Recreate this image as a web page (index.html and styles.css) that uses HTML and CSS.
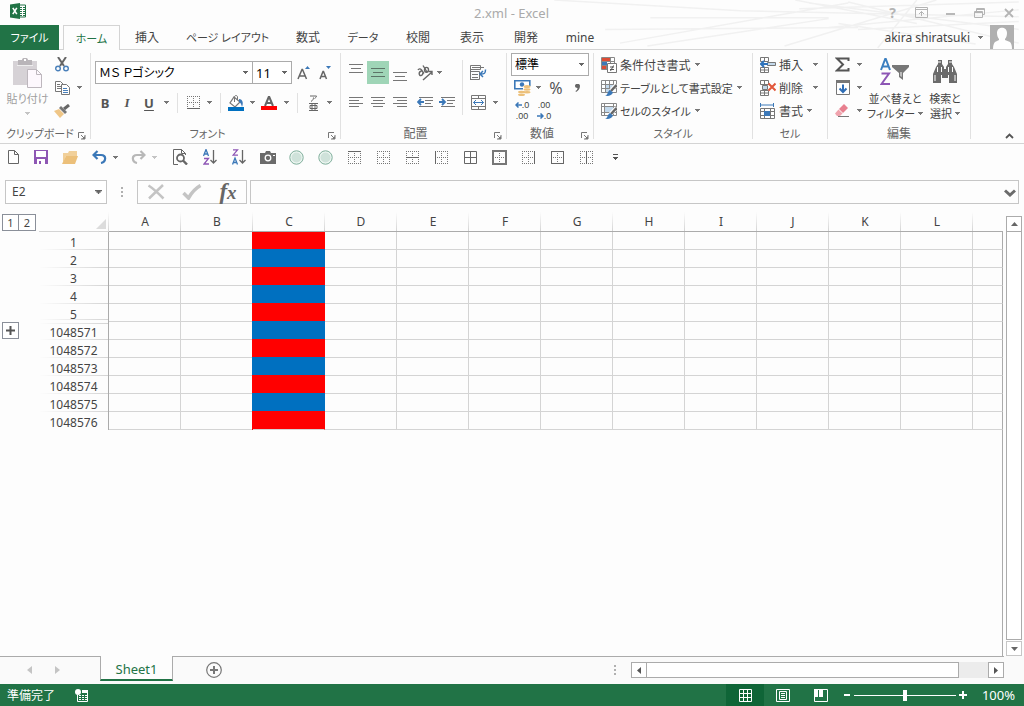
FILE: index.html
```html
<!DOCTYPE html>
<html lang="ja">
<head>
<meta charset="utf-8">
<meta name="viewport" content="width=device-width, initial-scale=1">
<title>2.xml - Excel</title>
<link rel="stylesheet" href="styles.css">
</head>
<body>
<svg class="defs" aria-hidden="true">
  <symbol id="caret" viewBox="0 0 5 3"><path d="M0 0h5v1H4v1H3v1H2V2H1V1H0z" fill="currentColor"/></symbol>
  <symbol id="launch" viewBox="0 0 8 8"><path d="M.5 6V.5H6M3 3l3 3M7 3v4H3" fill="none" stroke="#777"/><path d="M4 7h3V4z" fill="#777"/></symbol>
  <symbol id="dots" viewBox="0 0 13 13"><path d="M0 .5h13M0 6.5h13M0 12.5h13M.5 0v13M6.5 0v13M12.5 0v13" stroke="#777" stroke-dasharray="1 1" fill="none"/></symbol>
  <symbol id="table-brush" viewBox="0 0 16 16"><path d="M.5.5h15v12H.5zM.5 4.500h15M.5 8.500h15M4.500.5v12M8.500.5v12M12.500.5v8" fill="#fff" stroke="#888"/><path d="M5 5h3v3H5zM9 5h3v3H9zM5 9h3v3H5z" fill="#c3d9ec"/><path d="M15.500 4.500L9.500 11" stroke="#fff" stroke-width="4"/><path d="M15.500 5L10 11" stroke="#666" stroke-width="2.500"/><path d="M4 15.500c3 0 2-4 5-5.500l3 2.500c-1 3-5 4-8 3z" fill="#3b78b8"/></symbol>
  <symbol id="style-brush" viewBox="0 0 16 16"><path d="M.5.5h15v12H.5zM.5 3.500h15M.5 9.500h15M3.500.5v12M12.500.5v12" fill="#fff" stroke="#888"/><path d="M4 4h8v5H4z" fill="#c3d9ec"/><path d="M15.500 4.500L9.500 11" stroke="#fff" stroke-width="4"/><path d="M15.500 5L10 11" stroke="#666" stroke-width="2.500"/><path d="M4 15.500c3 0 2-4 5-5.500l3 2.500c-1 3-5 4-8 3z" fill="#3b78b8"/></symbol>
  <symbol id="macro" viewBox="0 0 15 15"><circle cx="7.500" cy="7.500" r="6.700" fill="#eef6f2" stroke="#7fae9b"/><circle cx="7.500" cy="7.500" r="5" fill="#cfe2da"/></symbol>
</svg>

<header class="top">
  <svg class="sketch" viewBox="0 0 524 50" fill="none" stroke="#f1f1f1" stroke-width="1.500" aria-hidden="true">
    <path d="M50 0L240 11M117 44L350 3M148 18H330M102 30L360 28M145 47L330 19M296 0L420 24M240 11L524 17M300 9L524 2M285 47L440 0M330 28L524 10M340 24L480 45M310 3L524 30M360 30L524 22M420 0L380 49M350 2L524 44"/>
  </svg>
  <div class="titlebar">
    <svg class="logo" width="16" height="16" viewBox="0 0 16 16" aria-label="Excel"><path d="M9 2h6.500v12H9z" fill="#fff" stroke="#217346"/><path d="M10 4h2v1h-2zM13 4h2v1h-2zM10 6h2v1h-2zM13 6h2v1h-2zM10 8h2v1h-2zM13 8h2v1h-2zM10 10h2v1h-2zM13 10h2v1h-2zM10 12h2v1h-2zM13 12h2v1h-2z" fill="#217346"/><path d="M0 1.500L10 0v16L0 14.500z" fill="#217346"/><path d="M2.800 4.800l4 6.400M6.800 4.800l-4 6.400" stroke="#fff" stroke-width="1.600"/></svg>
    <h1 class="title">2.xml - Excel</h1>
    <div class="window-controls">
      <button class="win help" aria-label="ヘルプ">?</button>
      <button class="win" aria-label="リボンの表示オプション"><svg width="13" height="11" viewBox="0 0 13 11" fill="none" stroke="#b4b4b4"><path d="M.5.5h12v10H.5zM.5 2.500h12M6.500 9V4.500M4 7l2.500-2.500L9 7"/></svg></button>
      <button class="win" aria-label="最小化"><svg width="9" height="11" viewBox="0 0 9 11"><path d="M0 6h9v2H0z" fill="#b8b8b8"/></svg></button>
      <button class="win" aria-label="元に戻す"><svg width="11" height="10" viewBox="0 0 11 10" fill="none" stroke="#b4b4b4"><path d="M.5 3.500h8v6h-8zM.5 4.500h8M2.500 3V.5h8v6H9M2.500 1.500h8"/></svg></button>
      <button class="win" aria-label="閉じる"><svg width="10" height="10" viewBox="0 0 10 10"><path d="M1 1l8 8M9 1L1 9" stroke="#b4b4b4" stroke-width="1.800"/></svg></button>
    </div>
  </div>
  <nav class="tabs">
    <button class="file kana">ファイル</button>
    <button class="tab active kana">ホーム</button>
    <button class="tab">挿入</button>
    <button class="tab wide kana">ページ レイアウト</button>
    <button class="tab">数式</button>
    <button class="tab data kana">データ</button>
    <button class="tab">校閲</button>
    <button class="tab">表示</button>
    <button class="tab">開発</button>
    <button class="tab">mine</button>
    <button class="user">akira shiratsuki <svg class="caret" width="5" height="3"><use href="#caret"/></svg></button>
    <svg class="avatar" width="24" height="24" viewBox="0 0 24 24" aria-hidden="true"><path d="M0 0h24v24H0z" fill="#b0b0b0"/><path d="M7 8c0-7 10-7 10 0 0 3-1 5-2 6v1l5 2c1 1 2 3 2 7H3c0-4 1-6 2-7l4-2v-1C8 13 7 11 7 8z" fill="#fff"/></svg>
  </nav>
</header>

<section class="ribbon" aria-label="リボン">
  <div class="group g-clip">
    <div class="body">
      <button class="big paste">
        <svg width="30" height="30" viewBox="0 0 30 30"><path d="M0 3h24v24H0z" fill="#d6d2d6"/><path d="M5 2h4c0-3 6-3 6 0h4v5H5z" fill="#b9b5b9"/><path d="M11 1h2v2h-2z" fill="#fff"/><path d="M4 7h16v1H4z" fill="#eee"/><path d="M14.500 11.500h9l5 5v13h-14z" fill="#fdf8fd" stroke="#bdb7bd"/><path d="M23.500 11.500v5h5" fill="none" stroke="#bdb7bd"/></svg>
        <span class="kana">貼り付け</span>
        <svg class="caret" width="5" height="3"><use href="#caret"/></svg>
      </button>
      <div class="stack">
        <div class="line"><button class="ib" aria-label="切り取り"><svg width="14" height="15" viewBox="0 0 14 15" fill="none"><path d="M3 0l6 9M11 0L5 9" stroke="#666" stroke-width="2"/><circle cx="3" cy="11.500" r="2.300" stroke="#4a80ba" stroke-width="1.400"/><circle cx="11" cy="11.500" r="2.300" stroke="#4a80ba" stroke-width="1.400"/></svg></button></div>
        <div class="line"><button class="ib" aria-label="コピー"><svg width="15" height="14" viewBox="0 0 15 14" fill="#fff" stroke="#777"><path d="M.5.5h5l3 3v7h-8zM2 3.500h3M2 5.500h4M2 7.500h4"/><path d="M6.500 3.500h5l3 3v7h-8z"/><path d="M8 7.500h4M8 9.500h5M8 11.500h5" stroke="#4a80ba"/></svg></button><button class="cb" aria-label="コピーのオプション"><svg class="caret" width="5" height="3"><use href="#caret"/></svg></button></div>
        <div class="line"><button class="ib" aria-label="書式のコピー"><svg width="16" height="14" viewBox="0 0 16 14"><path d="M15 1l-5 4" stroke="#666" stroke-width="3"/><path d="M7 2l6 6-2 2-6-6z" fill="#777"/><path d="M0 7l5-2 5 5-4 4z" fill="#efc687"/></svg></button></div>
      </div>
    </div>
    <div class="label"><span class="kana">クリップボード</span><button class="launch" aria-label="クリップボードの設定"><svg width="8" height="8"><use href="#launch"/></svg></button></div>
  </div>

  <div class="group g-font">
    <div class="body rows font-rows">
      <div class="line">
        <select class="combo family" aria-label="フォント"><option>ＭＳ Ｐゴシック</option></select>
        <select class="combo size" aria-label="フォント サイズ"><option>11</option></select>
        <button class="ib" aria-label="拡大"><svg width="13" height="14" viewBox="0 0 13 14" fill="none"><path d="M1 13L5 3.500h.5L9.500 13M2.500 10h6" stroke="#666" stroke-width="1.500"/><path d="M8 3h5l-2.500-3z" fill="#3b78b8"/></svg></button>
        <button class="ib" aria-label="縮小"><svg width="12" height="14" viewBox="0 0 12 14" fill="none"><path d="M1 13L4 5.500h.5L7.500 13M2 10.500h5" stroke="#666" stroke-width="1.500"/><path d="M7 0h5L9.500 3z" fill="#3b78b8"/></svg></button>
      </div>
      <div class="line">
        <button class="ib bold">B</button><button class="ib italic">I</button><button class="ib under">U</button><button class="cb" aria-label="下線"><svg class="caret" width="5" height="3"><use href="#caret"/></svg></button>
        <i class="sep"></i>
        <button class="ib s" aria-label="罫線"><svg width="13" height="13" viewBox="0 0 13 13"><use href="#dots"/><path d="M0 12h13v1H0z" fill="#666"/></svg></button><button class="cb" aria-label="罫線の種類"><svg class="caret" width="5" height="3"><use href="#caret"/></svg></button>
        <i class="sep"></i>
        <button class="ib s" aria-label="塗りつぶし"><svg width="16" height="16" viewBox="0 0 16 16"><path d="M6 2l6 5-5 5-5-4z" fill="#fff" stroke="#777" stroke-width="1.200"/><path d="M6.500 7V2c0-2 3-2 3 0v3" fill="none" stroke="#777"/><path d="M11 4c3 0 5 3 3 8-1-3-1-4-3-5z" fill="#3b78b8"/><path d="M0 12h16v4H0z" fill="#0070c0"/></svg></button><button class="cb" aria-label="塗りつぶしの色"><svg class="caret" width="5" height="3"><use href="#caret"/></svg></button>
        <button class="ib" aria-label="フォントの色"><svg width="16" height="14" viewBox="0 0 16 14"><path d="M4 10L7.700 1h.6L12 10M5.500 7h5" fill="none" stroke="#666" stroke-width="2"/><path d="M0 10h16v4H0z" fill="red"/></svg></button><button class="cb" aria-label="色の選択"><svg class="caret" width="5" height="3"><use href="#caret"/></svg></button>
        <i class="sep"></i>
        <button class="ib s" aria-label="ふりがな"><svg width="9" height="16" viewBox="0 0 9 16" fill="none" stroke="#666"><path d="M1 1h6.500c0 1-1 2-2 2.500M4.500 2.500c0 2-1 3-2.500 4M0 8.500h9M3 9v6M6 9v6M1 10.500h7v3H1zM0 15.500h9"/></svg></button><button class="cb" aria-label="ふりがなの設定"><svg class="caret" width="5" height="3"><use href="#caret"/></svg></button>
      </div>
    </div>
    <div class="label"><span class="kana">フォント</span><button class="launch" aria-label="フォントの設定"><svg width="8" height="8"><use href="#launch"/></svg></button></div>
  </div>

  <div class="group g-align">
    <div class="body">
      <div class="rows font-rows">
        <div class="line">
          <button class="ib" aria-label="上揃え"><svg width="14" height="17" viewBox="0 0 14 17"><path d="M0 .5h14M2 4.500h10M0 8.500h14" stroke="#777"/></svg></button>
          <button class="ib on" aria-label="上下中央揃え"><svg width="14" height="17" viewBox="0 0 14 17"><path d="M0 4.500h14M2 8.500h10M0 12.500h14" stroke="#5c7467"/></svg></button>
          <button class="ib" aria-label="下揃え"><svg width="14" height="17" viewBox="0 0 14 17"><path d="M0 8.500h14M2 12.500h10M0 16.500h14" stroke="#777"/></svg></button>
          <button class="ib orient" aria-label="方向"><svg width="17" height="16" viewBox="0 0 17 16" fill="none" stroke="#666" stroke-width="1.400"><path d="M1 5c1-2 3-1 3.500 0L7 8.500M4.500 6C1 7 2 11 4 10.500c2-.5 2-2 1.500-3M6 .5L10 7"/><ellipse cx="9.500" cy="4.800" rx="2" ry="2.400"/><path d="M6 15l9-8M11.500 6.500H15V10"/></svg></button><button class="cb" aria-label="方向の選択"><svg class="caret" width="5" height="3"><use href="#caret"/></svg></button>
        </div>
        <div class="line">
          <button class="ib" aria-label="左揃え"><svg width="14" height="11" viewBox="0 0 14 11"><path d="M0 .5h14M0 3.500h10M0 6.500h14M0 9.500h10" stroke="#777"/></svg></button>
          <button class="ib" aria-label="中央揃え"><svg width="14" height="11" viewBox="0 0 14 11"><path d="M0 .5h14M2 3.500h10M0 6.500h14M2 9.500h10" stroke="#777"/></svg></button>
          <button class="ib" aria-label="右揃え"><svg width="14" height="11" viewBox="0 0 14 11"><path d="M0 .5h14M4 3.500h10M0 6.500h14M4 9.500h10" stroke="#777"/></svg></button>
          <button class="ib indent" aria-label="インデントを減らす"><svg width="16" height="11" viewBox="0 0 16 11" fill="none"><path d="M2 .5h14M8 3.500h8M8 6.500h6M2 9.500h14" stroke="#777"/><path d="M1 5h6M4 2L1 5l3 3" stroke="#3b78b8" stroke-width="1.800"/></svg></button>
          <button class="ib" aria-label="インデントを増やす"><svg width="16" height="11" viewBox="0 0 16 11" fill="none"><path d="M2 .5h14M8 3.500h8M8 6.500h6M2 9.500h14" stroke="#777"/><path d="M0 5h6M3 2l3 3-3 3" stroke="#3b78b8" stroke-width="1.800"/></svg></button>
        </div>
      </div>
      <i class="sep tall"></i>
      <div class="rows font-rows">
        <div class="line"><button class="ib" aria-label="折り返して全体を表示する"><svg width="17" height="16" viewBox="0 0 17 16" fill="none" stroke="#777"><path d="M.5.5h10v4H.5zM2 2.500h12M.5 4v11M.5 6.500h9v8h-9M2 9.500h6M2 12.500h6"/><path d="M15.500 4.500c0 4-1 4.500-5 4.500M13 6l-3 3 3 3" stroke="#3b78b8" stroke-width="1.500"/></svg></button></div>
        <div class="line"><button class="ib" aria-label="セルを結合して中央揃え"><svg width="15" height="15" viewBox="0 0 15 15" fill="none" stroke="#777"><path d="M.5.5h14v14H.5zM.5 3.500h14M.5 11.500h14M7.500 0v3M7.500 12v3"/><path d="M2.500 7.500h10M5 5L2.500 7.500 5 10M10 5l2.500 2.500L10 10" stroke="#3b78b8"/></svg></button><button class="cb" aria-label="結合"><svg class="caret" width="5" height="3"><use href="#caret"/></svg></button></div>
      </div>
    </div>
    <div class="label"><span>配置</span><button class="launch" aria-label="配置の設定"><svg width="8" height="8"><use href="#launch"/></svg></button></div>
  </div>

  <div class="group g-num">
    <div class="body rows three">
      <select class="combo format" aria-label="数値の書式"><option>標準</option></select>
      <div class="line">
        <button class="ib" aria-label="通貨"><svg width="17" height="17" viewBox="0 0 17 17"><path d="M.8 1.800h15v8H.8z" fill="#fff" stroke="#3b78b8" stroke-width="1.600"/><circle cx="8" cy="5.500" r="2.200" fill="#3b78b8"/><path d="M9 7h8v8H9zM4 12h7v5H4z" fill="#fff"/><g fill="#ecc07a"><ellipse cx="13" cy="7.500" rx="3.500" ry="1.500"/><ellipse cx="13" cy="10.500" rx="3.500" ry="1.200"/><ellipse cx="13" cy="13.200" rx="3.500" ry="1.200"/><ellipse cx="7.500" cy="13" rx="3.500" ry="1.200"/><ellipse cx="7.500" cy="15.800" rx="3.500" ry="1.200"/></g></svg></button><button class="cb" aria-label="通貨の種類"><svg class="caret" width="5" height="3"><use href="#caret"/></svg></button>
        <button class="ib pct" aria-label="パーセント">%</button><button class="ib comma" aria-label="桁区切り"><svg width="5" height="8" viewBox="0 0 5 8"><path d="M0 2c0-3 5-3 5 0 0 3-2 5-4 6l-.5-1c1-.5 2-1.500 2-3C1 4 0 3 0 2z" fill="#666"/></svg></button>
      </div>
      <div class="line">
        <button class="ib dec" aria-label="小数点以下の表示桁数を増やす"><span><svg width="7" height="6" viewBox="0 0 7 6"><path d="M7 3H1M3.500.5L1 3l2.500 2.500" fill="none" stroke="#3b78b8" stroke-width="1.500"/></svg>.0</span><span>.00</span></button>
        <button class="ib dec" aria-label="小数点以下の表示桁数を減らす"><span>.00</span><span><svg width="7" height="6" viewBox="0 0 7 6"><path d="M0 3h6M3.500.5L6 3 3.500 5.500" fill="none" stroke="#3b78b8" stroke-width="1.500"/></svg>.0</span></button>
      </div>
    </div>
    <div class="label"><span>数値</span><button class="launch" aria-label="数値の設定"><svg width="8" height="8"><use href="#launch"/></svg></button></div>
  </div>

  <div class="group g-style">
    <div class="body rows three">
      <button class="cmd"><svg width="16" height="16" viewBox="0 0 16 16"><path d="M.5.5h13v12H.5zM.5 4.500h13M.5 8.500h13M5.500 0v12M9.500 0v12" fill="#fff" stroke="#888"/><path d="M1 1h8v3H1zM1 9h4v3H1z" fill="#dd4b34"/><path d="M1 5h5v3H1z" fill="#3b78b8"/><path d="M6.500 6.500h9v9h-9z" fill="#fff" stroke="#777"/><path d="M9 10h4M9 12.500h4M12.500 8.500l-3 5.500" stroke="#555"/></svg><span>条件付き書式</span><svg class="caret" width="5" height="3"><use href="#caret"/></svg></button>
      <button class="cmd kana"><svg width="16" height="16"><use href="#table-brush"/></svg><span>テーブルとして書式設定</span><svg class="caret" width="5" height="3"><use href="#caret"/></svg></button>
      <button class="cmd kana"><svg width="16" height="16"><use href="#style-brush"/></svg><span>セルのスタイル</span><svg class="caret" width="5" height="3"><use href="#caret"/></svg></button>
    </div>
    <div class="label"><span class="kana">スタイル</span></div>
  </div>

  <div class="group g-cell">
    <div class="body rows three">
      <button class="cmd"><svg width="16" height="16" viewBox="0 0 16 16" fill="#fff" stroke="#777"><path d="M.5.5h8v4h-8zM4.500.5v4M.5 10.500h8v5h-8zM4.500 10.500v5M.5 13h8"/><path d="M7.500 5.500h8v3h-8z" fill="#c3d9ec"/><path d="M1 7h7M4 4L1 7l3 3" fill="none" stroke="#2f73bb" stroke-width="2"/></svg><span>挿入</span><svg class="caret" width="5" height="3"><use href="#caret"/></svg></button>
      <button class="cmd"><svg width="16" height="16" viewBox="0 0 16 16" fill="#fff" stroke="#777"><path d="M.5.5h8v4h-8zM4.500.5v4M.5 10.500h8v5h-8zM4.500 10.500v5M.5 13h8"/><path d="M2.500 5.500h5v4h-5z" fill="#c3d9ec"/><path d="M8.500 3.500l7 7M15.500 3.500l-7 7" stroke="#e2573b" stroke-width="2"/></svg><span>削除</span><svg class="caret" width="5" height="3"><use href="#caret"/></svg></button>
      <button class="cmd near"><svg width="16" height="16" viewBox="0 0 16 16" fill="#fff" stroke="#777"><path d="M.5 0v4M13.500 0v4M1 2h12" stroke="#3b78b8"/><path d="M.5 5.500h14v10H.5zM.5 8.500h14M.5 12.500h14M4.500 5v10M10.500 5v10"/><path d="M4 8h6v5H4z" fill="#3b78b8" stroke="none"/></svg><span>書式</span><svg class="caret" width="5" height="3"><use href="#caret"/></svg></button>
    </div>
    <div class="label"><span class="kana">セル</span></div>
  </div>

  <div class="group g-edit">
    <div class="body">
      <div class="rows three">
        <div class="line"><button class="ib" aria-label="合計"><svg width="15" height="15" viewBox="0 0 15 15"><path d="M13.500 4V1.500H2l6 6-6 6h11.500V11" fill="none" stroke="#555" stroke-width="2"/></svg></button><button class="cb" aria-label="合計の種類"><svg class="caret" width="5" height="3"><use href="#caret"/></svg></button></div>
        <div class="line"><button class="ib" aria-label="フィル"><svg width="14" height="15" viewBox="0 0 14 15"><path d="M.5.5h13v14H.5z" fill="#fff" stroke="#777"/><path d="M0 0h14v3H0z" fill="#777"/><path d="M7 4.500V12M3.500 8.500L7 12l3.500-3.500" fill="none" stroke="#2f6db5" stroke-width="2"/></svg></button><button class="cb" aria-label="フィルの種類"><svg class="caret" width="5" height="3"><use href="#caret"/></svg></button></div>
        <div class="line"><button class="ib" aria-label="クリア"><svg width="15" height="14" viewBox="0 0 15 14"><path d="M9 0l4 4-5 5-4-4z" fill="#e8808f"/><path d="M3.500 5.500l4 4L5 12H2L0 9.500z" fill="#f0a3ad"/><path d="M3 12.500h11" stroke="#777"/></svg></button><button class="cb" aria-label="クリアの種類"><svg class="caret" width="5" height="3"><use href="#caret"/></svg></button></div>
      </div>
      <button class="big sort kana"><svg width="30" height="28" viewBox="0 0 30 28" fill="none"><path d="M1 12L5.200 1h.6L10 12M2.500 8.500h6" stroke="#3b7fc0" stroke-width="2"/><path d="M1.500 15.500H9L1.500 26H10" stroke="#8d56b5" stroke-width="2"/><path d="M12 7h17v2l-6 6v7l-4-3v-4l-7-6z" fill="#777"/><path d="M20.500 14v4l1 1v-5z" fill="#fff"/></svg><span>並べ替えと</span><span>フィルター <svg class="caret" width="5" height="3"><use href="#caret"/></svg></span></button>
      <button class="big find kana"><svg width="28" height="28" viewBox="0 0 28 28" fill="#6b6b6b"><path d="M7 2h4v4l2 3v2h2V9l2-3V2h4v4l2 3 3 7v9h-8v-8h-1v3h-6v-3h-1v8H2v-9l3-7 2-3z"/><path d="M7 4h3M18 4h3M6.500 9v5M10.500 9v5M17.500 9v5M21.500 9v5M4 17v6M24 17v6" stroke="#fff"/></svg><span>検索と</span><span>選択 <svg class="caret" width="5" height="3"><use href="#caret"/></svg></span></button>
    </div>
    <div class="label"><span>編集</span></div>
  </div>
  <button class="collapse" aria-label="リボンを折りたたむ"><svg width="9" height="6" viewBox="0 0 9 6"><path d="M1 5l3.500-3.500L8 5" fill="none" stroke="#555" stroke-width="1.800"/></svg></button>
</section>

<div class="qat" role="toolbar" aria-label="クイック アクセス">
  <button class="q first" aria-label="新規"><svg width="11" height="14" viewBox="0 0 11 14" fill="#fff" stroke="#666"><path d="M.5.5h6l4 4v9H.5zM6.500.5v4h4"/></svg></button>
  <button class="q" aria-label="保存"><svg width="14" height="14" viewBox="0 0 14 14"><path d="M0 0h14v14H0z" fill="#8e57b4"/><path d="M2 1h10v6H2zM3 9h8v5H3z" fill="#fff"/><path d="M5 11h2v3H5z" fill="#8e57b4"/></svg></button>
  <button class="q" aria-label="開く"><svg width="16" height="13" viewBox="0 0 16 13"><path d="M1 13V2h5l1-2h8v5H4L1 12z" fill="#f1d09a"/><path d="M4 5h12l-3 8H0z" fill="#ecc07a"/></svg></button>
  <button class="q undo" aria-label="元に戻す"><svg width="15" height="14" viewBox="0 0 15 14" fill="none" stroke="#3b78b8" stroke-width="2.200"><path d="M5.500 1l-4 4 4 4M2 5h7c6 0 5 7 0 8"/></svg></button><button class="cb" aria-label="元に戻す履歴"><svg class="caret" width="5" height="3"><use href="#caret"/></svg></button>
  <button class="q undo" aria-label="やり直し"><svg width="15" height="14" viewBox="0 0 15 14" fill="none" stroke="#b8b8b8" stroke-width="2.200"><path d="M9.500 1l4 4-4 4M13 5H6C0 5 1 12 6 13"/></svg></button><button class="cb off" aria-label="やり直し履歴"><svg class="caret" width="5" height="3"><use href="#caret"/></svg></button>
  <button class="q after" aria-label="印刷プレビュー"><svg width="15" height="16" viewBox="0 0 15 16" fill="none" stroke="#666"><path d="M5 15.500H.5V.5h8l4 4V6M8.500.5v4h4"/><circle cx="7.500" cy="9" r="3.500" stroke-width="1.800"/><path d="M10 11.500l4 4" stroke-width="2.400"/></svg></button>
  <button class="q" aria-label="昇順"><svg width="14" height="16" viewBox="0 0 14 16" fill="none"><path d="M.5 7L3 .5 5.500 7M1.500 5h3" stroke="#3b78b8" stroke-width="1.300"/><path d="M1 9.500h4.500L1 15h5" stroke="#8d56b5" stroke-width="1.300"/><path d="M10.500 1v13M7.500 11l3 3 3-3" stroke="#666" stroke-width="1.300"/></svg></button>
  <button class="q" aria-label="降順"><svg width="14" height="16" viewBox="0 0 14 16" fill="none"><path d="M1 .8h4.500L1 6.200h5" stroke="#8d56b5" stroke-width="1.300"/><path d="M.5 15.500L3 9l2.500 6.500M1.500 13.500h3" stroke="#3b78b8" stroke-width="1.300"/><path d="M10.500 1v13M7.500 11l3 3 3-3" stroke="#666" stroke-width="1.300"/></svg></button>
  <button class="q" aria-label="カメラ"><svg width="16" height="13" viewBox="0 0 16 13"><path d="M0 2h5l1-2h4l1 2h5v11H0z" fill="#6b6b6b"/><circle cx="8" cy="7" r="2.800" fill="none" stroke="#fff" stroke-width="1.300"/><path d="M13 4h2v1h-2z" fill="#fff"/></svg></button>
  <button class="q" aria-label="マクロ 1"><svg width="15" height="15"><use href="#macro"/></svg></button>
  <button class="q" aria-label="マクロ 2"><svg width="15" height="15"><use href="#macro"/></svg></button>
  <button class="q" aria-label="上罫線"><svg width="13" height="13" viewBox="0 0 13 13"><use href="#dots"/><path d="M0 0h13v1H0z" fill="#666"/></svg></button>
  <button class="q" aria-label="枠なし"><svg width="13" height="13" viewBox="0 0 13 13"><use href="#dots"/></svg></button>
  <button class="q" aria-label="横罫線"><svg width="13" height="13" viewBox="0 0 13 13"><use href="#dots"/><path d="M0 6h13v1H0z" fill="#666"/></svg></button>
  <button class="q" aria-label="左罫線"><svg width="13" height="13" viewBox="0 0 13 13"><use href="#dots"/><path d="M0 0h1v13H0z" fill="#666"/></svg></button>
  <button class="q" aria-label="格子"><svg width="13" height="13" viewBox="0 0 13 13"><path d="M.5.5h12v12H.5zM.5 6.500h12M6.500.5v12" fill="none" stroke="#666"/></svg></button>
  <button class="q" aria-label="太い外枠"><svg width="15" height="15" viewBox="0 0 15 15"><path d="M1 1h13v13H1z" fill="none" stroke="#777" stroke-width="2"/><path d="M3 7.500h9M7.500 3v9" stroke="#777" stroke-dasharray="1 1"/></svg></button>
  <button class="q" aria-label="右罫線"><svg width="13" height="13" viewBox="0 0 13 13"><use href="#dots"/><path d="M12 0h1v13h-1z" fill="#666"/></svg></button>
  <button class="q" aria-label="外枠"><svg width="13" height="13" viewBox="0 0 13 13"><use href="#dots"/><path d="M.5.5h12v12H.5z" fill="none" stroke="#666"/></svg></button>
  <button class="q" aria-label="縦罫線"><svg width="13" height="13" viewBox="0 0 13 13"><use href="#dots"/><path d="M6 0h1v13H6z" fill="#666"/></svg></button>
  <button class="q" aria-label="カスタマイズ"><svg width="5" height="6" viewBox="0 0 5 6"><path d="M0 0h5v1H0zM0 3h5v1H4v1H3v1H2V5H1V4H0z" fill="#555"/></svg></button>
</div>

<div class="formula">
  <select class="name-box" aria-label="名前ボックス"><option>E2</option></select>
  <svg class="grip" width="2" height="10" viewBox="0 0 2 10"><path d="M0 0h2v2H0zM0 4h2v2H0zM0 8h2v2H0z" fill="#b0b0b0"/></svg>
  <div class="fx-box">
    <button aria-label="キャンセル"><svg width="18" height="16" viewBox="0 0 18 16"><path d="M1.500 1.500C7 5 11 9 16.500 14.500M16 1L2 14.500" stroke="#c4c4c4" stroke-width="2.500" fill="none"/></svg></button>
    <button aria-label="入力"><svg width="20" height="16" viewBox="0 0 20 16"><path d="M1.500 9l5 5C10 8 14 4 18.500 1.500" fill="none" stroke="#c4c4c4" stroke-width="3.500"/></svg></button>
    <button class="fx" aria-label="関数の挿入">f<small>x</small></button>
  </div>
  <div class="formula-field">
    <input type="text" aria-label="数式バー">
    <button aria-label="数式バーの展開"><svg width="12" height="8" viewBox="0 0 12 8"><path d="M1 1.500l5 4.500 5-4.500" fill="none" stroke="#6b6b6b" stroke-width="3"/></svg></button>
  </div>
</div>

<main class="sheet">
  <aside class="outline">
    <div class="levels"><button class="level">1</button><button class="level">2</button></div>
    <button class="level expand" aria-label="展開"><svg width="9" height="9" viewBox="0 0 9 9"><path d="M4.500 0v9M0 4.500h9" stroke="#555" stroke-width="2"/></svg></button>
  </aside>
  <div class="pane">
    <table class="grid">
      <colgroup><col class="rowhead"><col span="12" class="col"><col></colgroup>
      <thead><tr><th class="corner"><svg width="10" height="10" viewBox="0 0 10 10"><path d="M10 0v10H0z" fill="#dcdcdc"/></svg></th><th>A</th><th>B</th><th>C</th><th>D</th><th>E</th><th>F</th><th>G</th><th>H</th><th>I</th><th>J</th><th>K</th><th>L</th><th class="rest"></th></tr></thead>
      <tbody>
        <tr><th>1</th><td></td><td></td><td class="red"></td><td></td><td></td><td></td><td></td><td></td><td></td><td></td><td></td><td></td><td></td></tr>
        <tr><th>2</th><td></td><td></td><td class="blue"></td><td></td><td></td><td></td><td></td><td></td><td></td><td></td><td></td><td></td><td></td></tr>
        <tr><th>3</th><td></td><td></td><td class="red"></td><td></td><td></td><td></td><td></td><td></td><td></td><td></td><td></td><td></td><td></td></tr>
        <tr><th>4</th><td></td><td></td><td class="blue"></td><td></td><td></td><td></td><td></td><td></td><td></td><td></td><td></td><td></td><td></td></tr>
        <tr class="before-hidden"><th>5</th><td></td><td></td><td class="red"></td><td></td><td></td><td></td><td></td><td></td><td></td><td></td><td></td><td></td><td></td></tr>
        <tr class="after-hidden"><th>1048571</th><td></td><td></td><td class="blue"></td><td></td><td></td><td></td><td></td><td></td><td></td><td></td><td></td><td></td><td></td></tr>
        <tr><th>1048572</th><td></td><td></td><td class="red"></td><td></td><td></td><td></td><td></td><td></td><td></td><td></td><td></td><td></td><td></td></tr>
        <tr><th>1048573</th><td></td><td></td><td class="blue"></td><td></td><td></td><td></td><td></td><td></td><td></td><td></td><td></td><td></td><td></td></tr>
        <tr><th>1048574</th><td></td><td></td><td class="red"></td><td></td><td></td><td></td><td></td><td></td><td></td><td></td><td></td><td></td><td></td></tr>
        <tr><th>1048575</th><td></td><td></td><td class="blue"></td><td></td><td></td><td></td><td></td><td></td><td></td><td></td><td></td><td></td><td></td></tr>
        <tr class="last"><th>1048576</th><td></td><td></td><td class="red"></td><td></td><td></td><td></td><td></td><td></td><td></td><td></td><td></td><td></td><td></td></tr>
      </tbody>
    </table>
    <div class="blank"></div>
  </div>
  <div class="vscroll">
    <button aria-label="上へ"><svg width="7" height="4" viewBox="0 0 7 4"><path d="M0 4h7L3.500 0z" fill="#666"/></svg></button>
    <div class="thumb"></div>
    <button class="down" aria-label="下へ"><svg width="7" height="4" viewBox="0 0 7 4"><path d="M0 0h7L3.500 4z" fill="#666"/></svg></button>
  </div>
</main>

<div class="sheet-tabs">
  <div class="nav"><button aria-label="前のシート"><svg width="5" height="8" viewBox="0 0 5 8"><path d="M5 0v8L0 4z" fill="#c4c4c4"/></svg></button><button aria-label="次のシート"><svg width="5" height="8" viewBox="0 0 5 8"><path d="M0 0v8l5-4z" fill="#c4c4c4"/></svg></button></div>
  <button class="sheet-tab">Sheet1</button>
  <div class="strip">
    <button class="add" aria-label="新しいシート"><svg width="16" height="16" viewBox="0 0 16 16" fill="none" stroke="#777"><circle cx="8" cy="8" r="7.300" stroke-width="1.200"/><path d="M8 4v8M4 8h8" stroke-width="2"/></svg></button>
    <svg class="grip" width="2" height="10" viewBox="0 0 2 10"><path d="M0 0h2v2H0zM0 4h2v2H0zM0 8h2v2H0z" fill="#b0b0b0"/></svg>
    <div class="hscroll">
      <button aria-label="左へ"><svg width="4" height="7" viewBox="0 0 4 7"><path d="M4 0v7L0 3.500z" fill="#555"/></svg></button>
      <div class="thumb"></div><div class="track"></div>
      <button aria-label="右へ"><svg width="4" height="7" viewBox="0 0 4 7"><path d="M0 0v7l4-3.500z" fill="#555"/></svg></button>
    </div>
  </div>
  <div class="tail"></div>
</div>

<footer class="status">
  <span class="ready">準備完了</span>
  <button class="macro-rec" aria-label="マクロの記録"><svg width="13" height="13" viewBox="0 0 13 13"><path d="M2.500 6v6.500h10V2" fill="none" stroke="#fff"/><path d="M7 1h6v3H7zM4 6h2v1H4zM7 6h2v1H7zM10 6h2v1h-2zM4 8h2v1H4zM7 8h2v1H7zM10 8h2v1h-2zM4 10h2v1H4zM7 10h2v1H7zM10 10h2v1h-2z" fill="#fff"/><circle cx="3" cy="3" r="3" fill="#fff"/></svg></button>
  <div class="views">
    <button class="view on" aria-label="標準"><svg width="13" height="13" viewBox="0 0 13 13"><path d="M.5.5h12v12H.5zM.5 4.500h12M.5 8.500h12M4.500.5v12M8.500.5v12" fill="none" stroke="#fff"/></svg></button>
    <button class="view" aria-label="ページ レイアウト"><svg width="14" height="13" viewBox="0 0 14 13"><path d="M.5.5h13v12H.5zM3.500 2.500h7v8h-7zM5 4.500h4M5 6.500h4M5 8.500h4" fill="none" stroke="#fff"/></svg></button>
    <button class="view" aria-label="改ページ プレビュー"><svg width="14" height="13" viewBox="0 0 14 13"><path d="M.5.5h13v12H.5z" fill="none" stroke="#fff"/><path d="M0 0h4v8H0zM5 0h4v8H5z" fill="#fff"/></svg></button>
  </div>
  <button class="zoom" aria-label="縮小"><svg width="6" height="2"><path d="M0 0h6v2H0z" fill="#fff"/></svg></button>
  <input class="slider" type="range" min="0" max="200" value="100" aria-label="ズーム">
  <button class="zoom" aria-label="拡大"><svg width="8" height="8"><path d="M3 0h2v3h3v2H5v3H3V5H0V3h3z" fill="#fff"/></svg></button>
  <span class="percent">100%</span>
</footer>
</body>
</html>
```
FILE: styles.css
```css
* { box-sizing: border-box; }

html, body { height: 100%; }

body {
  margin: 0;
  display: flex;
  flex-direction: column;
  overflow: hidden;
  background: #fdfdfd;
  color: #444;
  font: 12px/16px "Noto Sans", "Noto Sans CJK JP", sans-serif;
  font-feature-settings: "palt";
}

button, select, input {
  margin: 0;
  padding: 0;
  border: 0;
  border-radius: 0;
  background: none;
  color: inherit;
  font: inherit;
  font-feature-settings: inherit;
}

button {
  display: flex;
  align-items: center;
  justify-content: center;
  white-space: nowrap;
}

svg { flex: none; display: block; }
.defs { position: absolute; width: 0; height: 0; }
.caret { color: #777; }
.kana { font-size: 11px; }

/* Title bar and tabs */
.top { position: relative; flex: none; }
.sketch { position: absolute; top: 0; right: 0; width: 524px; height: 49px; }
.titlebar, .tabs { position: relative; display: flex; }
.titlebar { height: 25px; align-items: center; padding-right: 1px; }
.logo { margin: 0 0 3px 10px; }
.title { flex: 1; margin: 0 0 0 119px; text-align: center; font-size: 13px; line-height: 22px; font-weight: 400; color: #aaa; }
.window-controls { display: flex; }
.win { width: 29px; height: 24px; }
.help { color: #b4b4b4; font-size: 14px; font-weight: 700; }

.tabs { height: 25px; border-bottom: 1px solid #d4d4d4; }
.file { width: 59px; height: 25px; padding-top: 1px; background: #217346; color: #fff; }
.tab { width: 54px; padding-top: 2px; }
.tab.wide { width: 107px; }
.tab.data { width: 56px; }
.tab.active { width: 57px; height: 25px; margin-left: 4px; border: 1px solid #d4d4d4; border-bottom: 0; background: #fdfdfd; color: #217346; }
.user { margin-left: auto; gap: 8px; padding-top: 1px; }
.avatar { margin: 0 10px 0 7px; }

/* Ribbon */
.ribbon { flex: none; display: flex; height: 94px; padding-top: 3px; border-bottom: 1px solid #d4d4d4; }
.group { flex: none; display: flex; flex-direction: column; height: 86px; border-right: 1px solid #e1e1e1; }
.g-clip { width: 91px; }
.g-font { width: 250px; }
.g-align { width: 166px; }
.g-num { width: 87px; }
.g-style { width: 159px; }
.g-cell { width: 75px; }
.g-edit { width: 143px; }
.body { flex: 1; display: flex; }
.label { display: flex; height: 14px; line-height: 18px; color: #666; }
.label span { flex: 1; text-align: center; white-space: nowrap; }
.launch { width: 16px; padding-top: 7px; }
.rows { display: flex; flex-direction: column; }
.line { display: flex; align-items: center; height: 23px; }
.font-rows { padding-top: 8px; gap: 7px; }
.ib { width: 22px; height: 23px; }
.ib.s { width: 20px; }
.ib.on { background: #9fd5b7; }
.cb { width: 12px; height: 20px; }
.sep { flex: none; width: 1px; height: 20px; margin: 0 5px; background: #e1e1e1; }
.sep.tall { height: 55px; margin: 7px 4px 0; }

.big { flex-direction: column; justify-content: flex-start; line-height: 15px; }
.big span { display: flex; align-items: center; gap: 3px; }
.paste { width: 45px; margin: 5px 0 0 5px; color: #a0a0a0; }
.paste span { margin: 3px 0 6px; }
.paste .caret { color: #c4c4c4; }
.stack { margin-left: 1px; }

.g-clip .label span { padding-left: 6px; text-align: left; }
.g-font .body { padding-left: 3px; }
.combo, .name-box {
  appearance: none;
  border: 1px solid #ababab;
  background: #fff url("data:image/svg+xml,%3Csvg xmlns='http://www.w3.org/2000/svg' width='5' height='3'%3E%3Cpath d='M0 0h5v1H4v1H3v1H2V2H1V1H0z' fill='%23666'/%3E%3C/svg%3E") no-repeat right 4px center;
  height: 23px;
  padding: 0 3px;
  color: #000;
}
.family { width: 158px; margin-left: 1px; }
.size { width: 40px; margin-left: -1px; font-size: 13px; }
.bold, .italic, .under { font-size: 13px; font-weight: 700; color: #555; }
.italic { font-style: italic; font-family: "Liberation Serif", serif; }
.under { text-decoration: underline; text-underline-offset: 2px; }

.g-align .body { padding-left: 4px; }
.orient { margin-left: 3px; }
.orient + .cb { width: 6px; }
.indent { margin-left: 3px; }

.g-num .rows { padding-left: 4px; }
.format { width: 78px; }
.g-num .cb { width: 11px; }
.pct { width: 24px; font-size: 16px; color: #555; }
.comma { width: 18px; }
.dec { flex-direction: column; font: 9px/11px "Liberation Sans", sans-serif; }
.dec span { display: flex; align-items: center; }

.cmd { height: 23px; gap: 3px; justify-content: flex-start; padding-left: 7px; }
.cmd span { padding-top: 2px; }
.cmd .caret { margin-left: 1px; }
.g-cell .caret { margin-left: 7px; }
.g-cell .near .caret { margin-left: 1px; }

.g-edit .rows { padding-left: 4px; }
.g-edit .ib { width: 21px; }
.g-edit .big { padding-top: 5px; }
.g-edit .big > svg { margin-bottom: 5px; }
.sort { width: 60px; }
.find { width: 40px; }
.collapse { margin: 76px 10px 0 auto; height: 14px; }

/* Quick access */
.qat { flex: none; display: flex; align-items: center; height: 26px; }
.q { width: 29px; height: 22px; }
.q.first { width: 26px; }
.q.undo { width: 24px; margin-left: 3px; }
.qat .cb { width: 8px; }
.qat .cb + .undo { margin-left: 7px; }
.q.after { margin-left: 8px; }
.off .caret { color: #c4c4c4; }

/* Formula bar */
.formula { flex: none; display: flex; align-items: center; height: 24px; margin: 10px 5px 8px; }
.name-box { width: 102px; height: 24px; border-color: #c6c6c6; padding-left: 6px; color: #444; background-size: 7px 4px; }
.formula .grip { margin: 0 14px; }
.fx-box { display: flex; width: 110px; height: 24px; border: 1px solid #c6c6c6; }
.fx-box button { flex: 1; }
.fx-box .fx { align-items: baseline; font: italic 700 23px/21px "Liberation Serif", serif; color: #666; }
.fx small { font-size: 19px; }
.formula-field { flex: 1; display: flex; height: 24px; margin-left: 3px; border: 1px solid #c6c6c6; }
.formula-field input { flex: 1; min-width: 0; padding: 0 6px; }
.formula-field button { width: 16px; padding-top: 2px; }

/* Sheet */
.sheet { flex: 1; min-height: 0; display: flex; }
.outline { flex: none; width: 39px; padding: 2px 0 0 2px; }
.levels { display: flex; margin-bottom: 91px; }
.level { width: 17px; height: 17px; border: 1px solid #8a8f99; background: #fff; font-size: 11px; }
.level + .level { margin-left: -1px; width: 18px; }
.pane { flex: 1; min-width: 0; display: flex; flex-direction: column; }
.grid { width: 100%; table-layout: fixed; border-collapse: separate; border-spacing: 0; font-size: 12px; line-height: 14px; }
.rowhead { width: 70px; }
.col { width: 72px; }
.grid th, .grid td { height: 18px; padding: 0; font-weight: 400; }
.grid thead th { height: 20px; border-bottom: 1px solid #ababab; background: linear-gradient(transparent, #d4d4d4) right / 1px 100% no-repeat; }
.grid thead th.rest { background: none; }
.grid thead th.corner { border-bottom-color: #d4d4d4; }
.corner svg { margin: 4px 3px 0 auto; }
.grid tbody th {
  border-right: 1px solid #ababab;
  padding-top: 4px;
  background: linear-gradient(90deg, transparent, #d4d4d4) bottom / 100% 1px no-repeat;
}
.grid td { border-right: 1px solid #d4d4d4; border-bottom: 1px solid #d4d4d4; }
.grid td:last-child { border-right-color: #ababab; }
.grid .before-hidden th { background-position: 0 15px; }
.grid .after-hidden th {
  background: linear-gradient(90deg, transparent, #d4d4d4) 0 1px / 100% 1px no-repeat, linear-gradient(90deg, transparent, #d4d4d4) bottom / 100% 1px no-repeat;
}
.grid .last th { background: none; }
.grid td.red { color: #f00; }
.grid td.blue { color: #0070c0; }
.grid td.red, .grid td.blue { background: currentColor; border-right-color: currentColor; box-shadow: -1px 0 0 currentColor, -1px -1px 0 currentColor, 0 -1px 0 currentColor; }
.grid tr:first-child td.red { box-shadow: -1px 0 0 currentColor; }
.grid .last td.red { background-clip: padding-box; }
.blank { flex: 1; border-right: 1px solid #ababab; }
.vscroll { flex: none; width: 21px; display: flex; flex-direction: column; padding: 4px 2px 0 3px; }
.vscroll button { height: 16px; border: 1px solid #ababab; background: #fff; }
.vscroll .thumb { flex: 1; margin: -1px 0 1px; border: 1px solid #ababab; background: #fff; }
.vscroll .down { height: 15px; border-color: #c6c6c6; }

/* Sheet tabs */
.sheet-tabs { flex: none; display: flex; height: 28px; background: #fafafa; }
.nav { display: flex; width: 100px; padding: 0 28px 2px 15px; border-top: 1px solid #ababab; }
.nav button { flex: 1; }
.sheet-tab { width: 73px; height: 25px; padding-top: 3px; border: 1px solid #ababab; border-top: 0; border-bottom: 2px solid #217346; background: #fdfdfd; color: #217346; font-size: 13px; }
.strip { flex: 1; display: flex; align-items: center; padding: 0 0 1px 33px; border-top: 1px solid #ababab; }
.strip .grip { margin: 0 15px 0 auto; }
.hscroll { display: flex; flex: 0 1 373px; height: 16px; }
.hscroll button { width: 16px; border: 1px solid #ababab; background: #fff; }
.hscroll .thumb { flex: 1; margin-left: -1px; border: 1px solid #ababab; background: #fff; }
.hscroll .track { width: 29px; background: #ececec; }
.tail { width: 20px; }

/* Status bar */
.status { flex: none; display: flex; align-items: center; height: 22px; padding: 0 9px 0 7px; background: #217346; color: #fff; }
.ready { padding-top: 2px; }
.macro-rec { margin-left: 20px; }
.views { display: flex; margin-left: auto; align-self: stretch; }
.view { width: 38px; }
.view.on { background: #0f6537; }
.zoom { width: 14px; height: 16px; }
.slider { appearance: none; width: 102px; height: 12px; margin: 0; }
.slider::-webkit-slider-runnable-track { height: 11px; background: linear-gradient(#fff, #fff) center / 100% 1px no-repeat; }
.slider::-webkit-slider-thumb { appearance: none; width: 4px; height: 11px; background: #fff; }
.percent { margin-left: 11px; width: 34px; text-align: right; font-size: 13px; }
```
